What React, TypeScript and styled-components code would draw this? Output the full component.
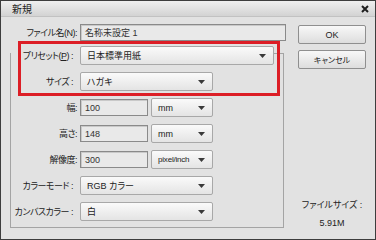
import React from 'react';
import styled, { createGlobalStyle } from 'styled-components';

const GlobalStyle = createGlobalStyle`
  html, body {
    margin: 0;
    padding: 0;
    background: #e2e2e2;
  }
  body {
    font-family: "Liberation Sans", "Noto Sans CJK JP", sans-serif;
  }
`;

function Arrow() {
  return (
    <svg width='7' height='4' viewBox='0 0 7 4'>
      <path d='M0 0h7L3.5 4z' fill='#3a3a3a' />
    </svg>
  );
}

function CloseIcon() {
  return (
    <svg width='8' height='8' viewBox='0 0 8 8'>
      <path d='M1 1l6 6M7 1L1 7' stroke='#1e1e1e' strokeWidth='2' />
    </svg>
  );
}

function Select({ value, width, small }: { value: string; width: number; small?: boolean }) {
  return (
    <Dropdown $w={width} $small={small}>
      <span>{value}</span>
      <Arrow />
    </Dropdown>
  );
}

export default function App() {
  return (
    <>
      <GlobalStyle />
      <Window>
        <TitleBar>
          <Title>新規</Title>
          <CloseIcon />
        </TitleBar>

        <Body>
          <LeftCol>
            <FileRow>
              <Label>ファイル名(N):</Label>
              <TextField $w={206}>名称未設定 1</TextField>
            </FileRow>

            <Group>
              <Legend>
                <Row>
                  <Label $inset>
                    プリセット(<u>P</u>) :
                  </Label>
                  <Select value='日本標準用紙' width={194} />
                </Row>
              </Legend>

              <Rows>
                <Row>
                  <Label $inset>サイズ :</Label>
                  <Select value='ハガキ' width={133} />
                </Row>
                <Row>
                  <Label>幅:</Label>
                  <TextField $w={68}>100</TextField>
                  <Select value='mm' width={62} />
                </Row>
                <Row>
                  <Label>高さ:</Label>
                  <TextField $w={68}>148</TextField>
                  <Select value='mm' width={62} />
                </Row>
                <Row>
                  <Label>解像度:</Label>
                  <TextField $w={68}>300</TextField>
                  <Select value='pixel/inch' width={62} small />
                </Row>
                <Row>
                  <Label $inset>カラーモード :</Label>
                  <Select value='RGB カラー' width={133} />
                </Row>
                <Row>
                  <Label $inset>カンバスカラー :</Label>
                  <Select value='白' width={133} />
                </Row>
              </Rows>
            </Group>
          </LeftCol>

          <RightCol>
            <Button>OK</Button>
            <Button $small>キャンセル</Button>
            <FileSize>
              <div>ファイルサイズ :</div>
              <div>5.91M</div>
            </FileSize>
          </RightCol>
        </Body>

        <Highlight />
      </Window>
    </>
  );
}

const Window = styled.div`
  position: relative;
  width: 376px;
  height: 240px;
  box-sizing: border-box;
  border: 1px solid #3d3d3d;
  background: #e2e2e2;
  display: flex;
  flex-direction: column;
  color: #222;
  font-size: 9px;
  font-feature-settings: "palt";
`;

const TitleBar = styled.div`
  flex: none;
  height: 15px;
  display: flex;
  align-items: center;
  justify-content: space-between;
  padding: 0 6px 0 11px;
  background: linear-gradient(#efefef, #d3d3d3);
  border-bottom: 1px solid #c2c2c2;
`;

const Title = styled.span`
  font-size: 10px;
  color: #222;
`;

const Body = styled.div`
  flex: 1;
  display: flex;
  padding: 7px 9px 10px 9px;
`;

const LeftCol = styled.div`
  width: 274px;
  display: flex;
  flex-direction: column;
`;

const FileRow = styled.div`
  display: flex;
  align-items: center;
  gap: 3px;
  height: 17px;
`;

const Label = styled.span<{ $inset?: boolean }>`
  flex: none;
  width: 66px;
  box-sizing: border-box;
  padding-right: ${(p) => (p.$inset ? '4px' : '0')};
  text-align: right;
  white-space: nowrap;
  line-height: 12px;
  letter-spacing: -0.5px;

  ${FileRow} & {
    width: 67px;
  }
`;

const TextField = styled.div<{ $w: number }>`
  flex: none;
  width: ${(p) => p.$w}px;
  height: 17px;
  box-sizing: border-box;
  padding: 0 4px;
  display: flex;
  align-items: center;
  border: 1px solid #8a8a8a;
  box-shadow: inset 1px 1px 0 #c9c9c9;
  background: #e9e9e9;
  color: #333;
  white-space: nowrap;
`;

const Group = styled.fieldset`
  margin: 0;
  min-inline-size: 0;
  width: 274px;
  box-sizing: border-box;
  border: 1px solid #a4a4a4;
  padding: 7px 8px 6px 0;
`;

const Legend = styled.legend`
  margin: 0;
  padding: 5px 0 0 0;
`;

const Rows = styled.div`
  display: flex;
  flex-direction: column;
  gap: 7px;
`;

const Row = styled.div`
  display: flex;
  align-items: center;
  gap: 3px;
  height: 19px;
`;

const Dropdown = styled.div<{ $w: number; $small?: boolean }>`
  flex: none;
  width: ${(p) => p.$w}px;
  height: 19px;
  box-sizing: border-box;
  display: flex;
  align-items: center;
  justify-content: space-between;
  padding: 0 7px 0 6px;
  border: 1px solid #a8a8a8;
  border-radius: 2px;
  background: linear-gradient(#fafafa, #e4e4e4);
  font-size: ${(p) => (p.$small ? '8px' : '9px')};
  letter-spacing: ${(p) => (p.$small ? '-0.2px' : '0')};
  white-space: nowrap;
  overflow: hidden;
`;

const RightCol = styled.div`
  width: 68px;
  margin-left: 14px;
  padding-top: 1px;
  display: flex;
  flex-direction: column;
  gap: 6px;
`;

const Button = styled.div<{ $small?: boolean }>`
  height: 19px;
  box-sizing: border-box;
  display: flex;
  align-items: center;
  justify-content: center;
  border: 1px solid #8f8f8f;
  border-radius: 2px;
  background: linear-gradient(#f8f8f8, #dddddd);
  font-size: ${(p) => (p.$small ? '8px' : '9px')};
`;

const FileSize = styled.div`
  margin-top: auto;
  display: flex;
  flex-direction: column;
  align-items: center;
  gap: 6px;
  line-height: 12px;
  color: #222;
`;

const Highlight = styled.div`
  position: absolute;
  left: 17px;
  top: 40px;
  width: 262px;
  height: 55px;
  box-sizing: border-box;
  border: 3px solid #dc1e26;
  pointer-events: none;
`;
